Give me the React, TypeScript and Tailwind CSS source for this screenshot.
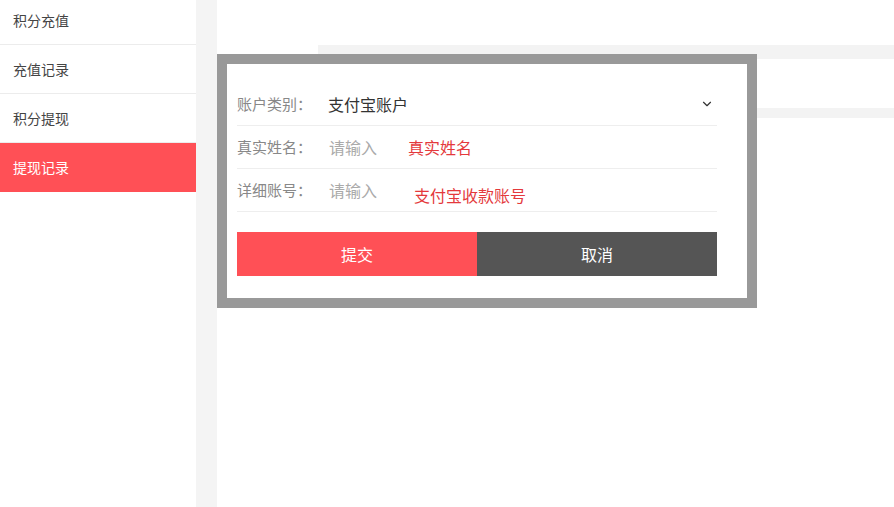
import { ChevronDown } from "lucide-react"

const menus = [
  { label: "积分充值" },
  { label: "充值记录" },
  { label: "积分提现" },
  { label: "提现记录", active: true },
]

const font = { fontFamily: '"Noto Sans CJK SC", "Noto Sans", sans-serif' }

export default function App() {
  return (
    <div className="flex h-[507px] w-[894px] overflow-hidden bg-white" style={font}>
      <aside className="w-[196px] shrink-0 bg-white">
        <div className="-mt-[4px]">
          {menus.map(item => (
            <div
              key={item.label}
              className={
                item.active
                  ? "flex h-[49px] items-center bg-[#ff5056] px-[13px] text-[14px] text-white"
                  : "flex h-[49px] items-center border-b border-[#ececec] px-[13px] text-[14px] text-[#444]"
              }
            >
              {item.label}
            </div>
          ))}
        </div>
      </aside>
      <div className="w-[21px] shrink-0 bg-[#f4f4f4]" />

      <main className="relative flex-1">
        <div className="ml-[101px] mt-[45px] h-[14px] bg-[#f3f3f3]" />
        <div className="ml-[101px] mt-[49px] h-[10px] bg-[#f3f3f3]" />

        {/* dialog */}
        <div className="absolute left-0 top-[54px] w-[540px] border-[10px] border-[#999] bg-white">
          <div className="pb-[22px] pl-[10px] pr-[30px] pt-[19px]">
            <div className="flex h-[43px] items-center border-b border-[#eee]">
              <span className="w-[91px] text-[15px] text-[#888]">账户类别：</span>
              <span className="flex-1 text-[16px] text-[#333]">支付宝账户</span>
              <ChevronDown className="mr-[3px] text-[#333]" style={{ width: 14, height: 14 }} strokeWidth={2} />
            </div>
            <div className="relative flex h-[43px] items-center border-b border-[#eee]">
              <span className="w-[92px] text-[15px] text-[#888]">真实姓名：</span>
              <span className="text-[16px] text-[#aaa]">请输入</span>
              <span className="absolute left-[171px] top-[9px] text-[16px] text-[#e4393c]">真实姓名</span>
            </div>
            <div className="relative flex h-[43px] items-center border-b border-[#eee]">
              <span className="w-[92px] text-[15px] text-[#888]">详细账号：</span>
              <span className="text-[16px] text-[#aaa]">请输入</span>
              <span className="absolute left-[177px] top-[14px] text-[16px] text-[#e4393c]">支付宝收款账号</span>
            </div>
            <div className="mt-[20px] flex h-[44px]">
              <button className="flex-1 bg-[#ff5056] text-[16px] text-white">提交</button>
              <button className="flex-1 bg-[#555] text-[16px] text-white">取消</button>
            </div>
          </div>
        </div>
      </main>
    </div>
  )
}
